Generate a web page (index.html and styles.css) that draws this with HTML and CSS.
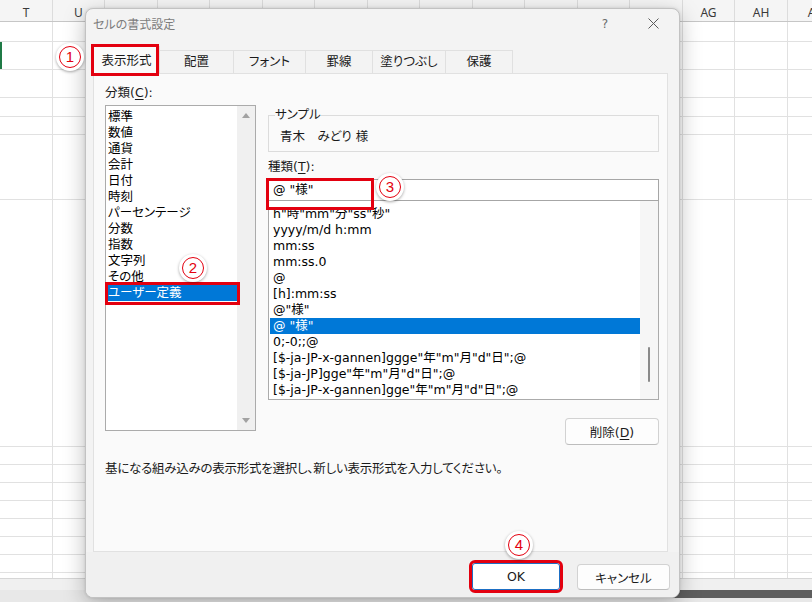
FILE: index.html
```html
<!DOCTYPE html>
<html lang="ja">
<head>
<meta charset="utf-8">
<title>セルの書式設定</title>
<link rel="stylesheet" href="styles.css">
</head>
<body>
<div class="sheet">
  <div class="colhdr">
    <span>T</span><span>U</span><span></span><span></span><span></span><span></span><span></span><span></span>
    <span></span><span></span><span></span><span></span><span></span><span>AG</span><span>AH</span><span>AI</span>
  </div>
  <div class="rows">
    <div class="row h20"></div>
    <div class="row h28 sel"></div>
    <div class="row h28"></div>
    <div class="row h19"></div>
    <div class="row h18"></div>
    <div class="row h65"></div>
    <div class="row h247"></div>
    <div class="row h18"></div>
    <div class="row h18"></div>
    <div class="row h18"></div>
    <div class="row h18"></div>
    <div class="row h18"></div>
    <div class="row h18"></div>
    <div class="row h18"></div>
    <div class="row h5"></div>
  </div>
  <div class="hscroll"></div>
  <div class="bottombar"><div class="darkbar"></div></div>
</div>

<div class="dialog">
  <div class="titlebar">
    <span class="title">セルの書式設定</span>
    <span class="help">?</span>
    <span class="close"><svg width="11" height="11" viewBox="0 0 11 11"><path d="M0.5 0.5 L10.5 10.5 M10.5 0.5 L0.5 10.5" stroke="#5a5a5a" stroke-width="1" fill="none"/></svg></span>
  </div>
  <div class="tabs">
    <div class="tab active t1">表示形式</div>
    <div class="tab t2">配置</div>
    <div class="tab t3">フォント</div>
    <div class="tab t4">罫線</div>
    <div class="tab t5">塗りつぶし</div>
    <div class="tab t6">保護</div>
  </div>
  <div class="panel">
    <div class="cols">
      <div class="left">
        <div class="lbl">分類(<u>C</u>):</div>
        <div class="catlist">
          <ul>
            <li>標準</li>
            <li>数値</li>
            <li>通貨</li>
            <li>会計</li>
            <li>日付</li>
            <li>時刻</li>
            <li>パーセンテージ</li>
            <li>分数</li>
            <li>指数</li>
            <li>文字列</li>
            <li>その他</li>
            <li class="selected marked">ユーザー定義</li>
          </ul>
          <div class="vscroll"><span class="up"></span><span class="down"></span></div>
        </div>
      </div>
      <div class="right">
        <fieldset class="sample">
          <legend>サンプル</legend>
          <div class="sample-text">青木　みどり 様</div>
        </fieldset>
        <div class="lbl kind">種類(<u>T</u>):</div>
        <div class="typebox"><span>@ "様"</span></div>
        <div class="fmtlist">
          <ul>
            <li>h"時"mm"分"ss"秒"</li>
            <li>yyyy/m/d h:mm</li>
            <li>mm:ss</li>
            <li>mm:ss.0</li>
            <li>@</li>
            <li>[h]:mm:ss</li>
            <li>@"様"</li>
            <li class="selected">@ "様"</li>
            <li>0;-0;;@</li>
            <li>[$-ja-JP-x-gannen]ggge"年"m"月"d"日";@</li>
            <li>[$-ja-JP]gge"年"m"月"d"日";@</li>
            <li>[$-ja-JP-x-gannen]gge"年"m"月"d"日";@</li>
          </ul>
          <div class="thinscroll"><span class="thumb"></span></div>
        </div>
        <div class="delrow"><button class="btn del">削除(<u>D</u>)</button></div>
      </div>
    </div>
    <p class="desc">基になる組み込みの表示形式を選択し、新しい表示形式を入力してください。</p>
  </div>
  <div class="footer">
    <button class="btn ok">OK</button>
    <button class="btn cancel">キャンセル</button>
  </div>
</div>

<div class="anno a1"><span>1</span></div>
<div class="anno a2"><span>2</span></div>
<div class="anno a3"><span>3</span></div>
<div class="anno a4"><span>4</span></div>
</body>
</html>
```

FILE: styles.css
```css
* { box-sizing: border-box; }
html, body { margin: 0; padding: 0; }
body {
  width: 812px;
  height: 602px;
  overflow: hidden;
  position: relative;
  background: #fff;
  font-family: "DejaVu Sans", "Noto Sans CJK JP", sans-serif;
  font-size: 12.5px;
  color: #000;
  font-feature-settings: "palt";
}

/* spreadsheet background */
.sheet { display: flex; flex-direction: column; height: 602px; }
.colhdr {
  display: grid;
  grid-template-columns: repeat(8, 53px 52px);
  height: 22px;
  background: #f5f5f5;
  border-bottom: 1px solid #c6c6c6;
  font-family: "Noto Sans", sans-serif;
  font-size: 12px;
  color: #3a3a3a;
  overflow: hidden;
}
.colhdr span { border-right: 1px solid #dcdcdc; text-align: center; line-height: 18px; padding-top: 4px; white-space: nowrap; overflow: hidden; }
.rows {
  background-image: linear-gradient(90deg, transparent 52px, #e1e1e1 52px, #e1e1e1 53px, transparent 53px, transparent 104px, #e1e1e1 104px);
  background-size: 105px 100%;
}
.row { border-bottom: 1px solid #e1e1e1; }
.row.sel { box-shadow: inset 2px 0 0 #1f7a46; }
.h20 { height: 20px; }
.h28 { height: 28px; }
.h19 { height: 19px; }
.h18 { height: 18px; }
.h65 { height: 65px; }
.h247 { height: 247px; }
.h5 { height: 5px; border-bottom: 0; }
.hscroll { height: 12px; background: #f0f0f0; border-top: 1px solid #d6d6d6; }
.bottombar { height: 12px; background: #e8e8e8; }
.darkbar { height: 8px; margin-left: 300px; background: #5e5e5e; }

/* dialog */
.dialog {
  position: absolute;
  left: 85px;
  top: 8px;
  width: 595px;
  height: 590px;
  background: #f3f3f3;
  border: 1px solid #c2c2c2;
  border-radius: 8px;
  box-shadow: 0 6px 22px rgba(0,0,0,0.26), 0 0 3px rgba(0,0,0,0.12);
  display: flex;
  flex-direction: column;
  overflow: hidden;
}
.titlebar {
  height: 29px;
  display: flex;
  align-items: center;
  padding-left: 7px;
  font-family: "Noto Sans CJK JP", sans-serif;
}
.title { font-size: 12px; color: #7c7c7c; }
.help { margin-left: auto; width: 30px; margin-right: 10px; text-align: center; color: #6a6a6a; font-size: 12px; font-family: "DejaVu Sans", sans-serif; }
.close { width: 46px; margin-right: 3px; display: flex; justify-content: center; align-items: center; }

.tabs { height: 35px; display: flex; align-items: flex-end; padding-left: 7px; }
.tab {
  height: 23px;
  line-height: 22px;
  text-align: center;
  background: #f3f3f3;
  border: 1px solid #e0e0e0;
  border-right: 0;
  border-bottom: 0;
  color: #1a1a1a;
}
.tab:last-child { border-right: 1px solid #e0e0e0; }
.tab.active {
  height: 28px;
  line-height: 27px;
  margin-bottom: -1px;
  background: #fafafa;
  border-right: 1px solid #e0e0e0;
  position: relative;
  z-index: 2;
}
.tab.active::after {
  content: "";
  position: absolute;
  left: -3px;
  right: 0;
  top: -3px;
  bottom: -2px;
  border: 3px solid #e3000f;
}
.tab.active + .tab { border-left: 0; }
.t1 { width: 67px; }
.t2 { width: 73px; }
.t3 { width: 72px; }
.t4 { width: 67px; }
.t5 { width: 73px; }
.t6 { width: 68px; }

.panel {
  margin: 0 11px 0 7px;
  height: 479px;
  background: #fafafa;
  border: 1px solid #e1e1e1;
  padding: 11px 8px 0 11px;
}
.cols { display: flex; gap: 12px; align-items: flex-start; }
.left { width: 151px; }
.right { width: 391px; }
.lbl { line-height: 16px; height: 16px; margin-bottom: 4px; color: #1a1a1a; }
u { text-decoration: underline; text-underline-offset: 2px; }

ul { list-style: none; margin: 0; padding: 0; }
li { height: 16px; line-height: 16px; white-space: nowrap; }
li.selected { background: #0078d7; color: #fff; }

.catlist {
  height: 326px;
  border: 1px solid #ababab;
  background: #fff;
  display: flex;
}
.catlist ul { width: 131px; padding-top: 3px; }
.catlist li { padding-left: 2px; }
li.marked { position: relative; }
li.marked::after {
  content: "";
  position: absolute;
  left: -1px;
  right: -3px;
  top: -3px;
  bottom: -4px;
  border: 3px solid #e3000f;
  z-index: 3;
}
.vscroll {
  width: 18px;
  background: #f0f0f0;
  display: flex;
  flex-direction: column;
  justify-content: space-between;
  align-items: center;
  padding: 7px 0;
}
.up { width: 0; height: 0; border-left: 4px solid transparent; border-right: 4px solid transparent; border-bottom: 5px solid #a2a2a2; }
.down { width: 0; height: 0; border-left: 4px solid transparent; border-right: 4px solid transparent; border-top: 5px solid #a2a2a2; }

.sample {
  margin: 22px 0 0;
  padding: 0 6px 5px 6px;
  border: 1px solid #dcdcdc;
  min-width: 0;
  height: 45px;
}
.sample legend { padding: 0; line-height: 16px; color: #1a1a1a; }
.sample-text { line-height: 16px; margin-top: 6px; padding-left: 5px; color: #1a1a1a; }
.kind { margin-top: 7px; }
.typebox {
  position: relative;
  height: 22px;
  border: 1px solid #a6a6a6;
  background: #fff;
  padding-left: 4px;
  line-height: 20px;
}
.typebox::after {
  content: "";
  position: absolute;
  left: -3px;
  top: -2px;
  width: 102px;
  height: 26px;
  border: 3px solid #e3000f;
}
.fmtlist {
  height: 199px;
  border: 1px solid #ababab;
  border-top: 0;
  background: #fff;
  display: flex;
}
.fmtlist ul { width: 371px; padding: 5px 0 0 1px; }
.fmtlist li { padding-left: 3px; }
.thinscroll { width: 18px; background: #f6f6f6; display: flex; justify-content: center; }
.thumb { width: 2px; height: 35px; margin-top: 146px; background: #8a8a8a; border-radius: 1px; }

.delrow { display: flex; justify-content: flex-end; margin-top: 18px; }
.btn {
  font: inherit;
  font-feature-settings: "palt";
  color: #1a1a1a;
  background: #fdfdfd;
  border: 1px solid #d2d2d2;
  border-bottom-color: #bdbdbd;
  border-radius: 4px;
  padding: 0;
  text-align: center;
}
.del { width: 94px; height: 27px; }
.desc { margin: 16px 0 0; line-height: 16px; color: #1a1a1a; letter-spacing: -0.25px; }

.footer {
  flex: 1;
  display: flex;
  justify-content: flex-end;
  align-items: flex-start;
  gap: 17px;
  padding: 11px 9px 0 0;
  background: #f0f0f0;
}
.ok {
  width: 88px;
  height: 27px;
  border: 1px solid #1d6fc4;
  border-radius: 3px;
  background: #fff;
  outline: 3px solid #e3000f;
}
.cancel { width: 93px; height: 26px; margin-top: 1px; }

/* numbered callouts */
.anno {
  position: absolute;
  width: 28px;
  height: 28px;
  border-radius: 50%;
  background: #fff;
  box-shadow: 0 1px 3px rgba(0,0,0,0.35);
  display: flex;
  align-items: center;
  justify-content: center;
  z-index: 10;
}
.anno span {
  width: 22px;
  height: 22px;
  border: 1.5px solid #e3000f;
  border-radius: 50%;
  color: #e3000f;
  font-family: "Liberation Sans", sans-serif;
  font-size: 15px;
  line-height: 19px;
  text-align: center;
}
.a1 { left: 56px; top: 43px; }
.a2 { left: 179px; top: 254px; }
.a3 { left: 376px; top: 173px; }
.a4 { left: 505px; top: 531px; }
```
